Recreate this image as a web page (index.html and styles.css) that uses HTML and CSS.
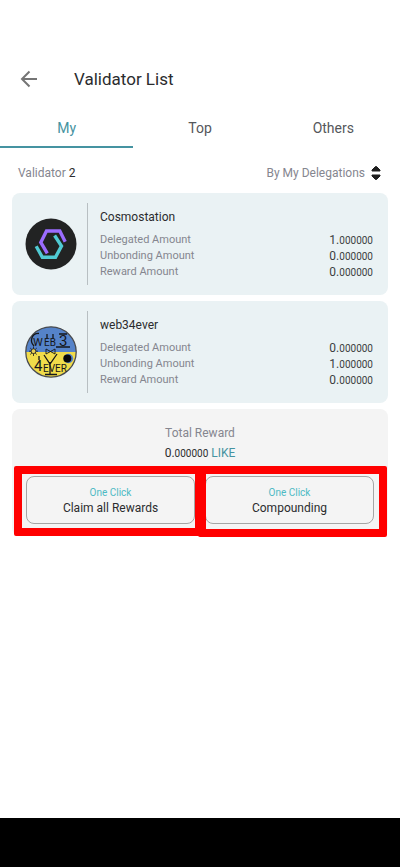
FILE: index.html
```html
<!DOCTYPE html>
<html lang="en">
<head>
<meta charset="utf-8">
<meta name="viewport" content="width=device-width, initial-scale=1">
<title>Validator List</title>
<link rel="stylesheet" href="styles.css">
</head>
<body>
<header class="topbar">
  <button class="back" type="button" aria-label="Back">
    <svg width="18" height="18" viewBox="0 0 18 18" fill="none" stroke="#757575" stroke-width="2"><path d="M17 9H2.500M9.500 1.500L2 9l7.500 7.500"/></svg>
  </button>
  <h1 class="title">Validator List</h1>
</header>
<nav class="tabs">
  <button class="tab active" type="button">My</button>
  <button class="tab" type="button">Top</button>
  <button class="tab" type="button">Others</button>
</nav>
<main class="content">
  <div class="summary">
    <span>Validator <span class="count">2</span></span>
    <button class="sort" type="button">By My Delegations
      <svg width="10" height="16" viewBox="0 0 10 16" fill="#1f1f1f" stroke="#1f1f1f" stroke-linejoin="round"><path d="M4.500 1.500h1L9 5v1H1V5ZM4.500 14.500h1L9 11v-1H1v1Z"/></svg>
    </button>
  </div>

  <article class="card">
    <svg class="logo" viewBox="0 0 52 52" fill="none" stroke-width="3.400">
      <circle cx="26" cy="26" r="25.500" fill="#222323"/>
      <path stroke="#9b6cff" d="M40.200 23.800L34.800 13H21.500L15.800 24.500l6.500 10.800"/>
      <path stroke="#50cbd4" d="M11.200 28.200L17.300 39.200H30.500l6-11.200L29.600 17.500"/>
    </svg>
    <div class="details">
      <h2 class="name">Cosmostation</h2>
      <dl class="amounts">
        <dt>Delegated Amount</dt><dd>1.<small>000000</small></dd>
        <dt>Unbonding Amount</dt><dd>0.<small>000000</small></dd>
        <dt>Reward Amount</dt><dd>0.<small>000000</small></dd>
      </dl>
    </div>
  </article>

  <article class="card">
    <svg class="logo" viewBox="0 0 52 52" fill="none" stroke="#15171a" stroke-width="1.300">
      <circle cx="26" cy="26" r="25.200" fill="#f0dc4a" stroke="none"/>
      <path d="M.8 26a25.200 25.200 0 0 1 50.400 0Z" fill="#5583c9" stroke="none"/>
      <circle cx="26" cy="26" r="25.200" stroke="#484b50"/>
      <path d="M14 7.500C7 7 4 15 9 20M22 8v5M28 8v5M31 21h14M34 8h8M19 29l6 9 7-10M25 36v12M20 48.500h12M14 30v4"/>
      <g class="logo-text">
        <text x="8" y="20" font-size="11">W</text>
        <text x="19" y="20" font-size="10">EB</text>
        <text x="34" y="20" font-size="15">3</text>
        <text x="9" y="45" font-size="15">4</text>
        <text x="18" y="46" font-size="10">EVER</text>
      </g>
      <circle cx="43.500" cy="32.500" r="4.700" fill="#5583c9" stroke="none"/>
      <circle cx="42.300" cy="32.500" r="4" fill="#08090b" stroke="none"/>
      <path stroke-width=".8" d="M8.500 20.500v9.500M4 25.200h9M5.200 22l6.600 6.500M11.800 22l-6.600 6.500"/>
      <circle cx="8.500" cy="25.200" r="2.400" fill="#e5ce55" stroke-width=".8"/>
      <path stroke-width=".9" d="M21 23l9 5v-5l-9 5Z"/>
    </svg>
    <div class="details">
      <h2 class="name">web34ever</h2>
      <dl class="amounts">
        <dt>Delegated Amount</dt><dd>0.<small>000000</small></dd>
        <dt>Unbonding Amount</dt><dd>1.<small>000000</small></dd>
        <dt>Reward Amount</dt><dd>0.<small>000000</small></dd>
      </dl>
    </div>
  </article>

  <section class="reward">
    <h2 class="reward-title">Total Reward</h2>
    <p class="reward-total">0.<small>000000</small> <span class="denom">LIKE</span></p>
    <div class="actions">
      <div class="highlight"><button class="action" type="button"><span class="hint">One Click</span>Claim all Rewards</button></div>
      <div class="highlight"><button class="action" type="button"><span class="hint">One Click</span>Compounding</button></div>
    </div>
  </section>
</main>
<footer class="system-bar"></footer>
</body>
</html>
```
FILE: styles.css
```css
* {
  box-sizing: border-box;
}

body {
  margin: 0;
  min-height: 100vh;
  display: flex;
  flex-direction: column;
  background: #fff;
  color: #2b2c2e;
  font-family: Roboto, sans-serif;
  font-size: 12px;
}

h1, h2, p, dl, dd {
  margin: 0;
  font-weight: 400;
}

button {
  border: 0;
  padding: 0;
  background: none;
  color: inherit;
  font: inherit;
}

svg {
  display: block;
  flex: none;
}

.topbar {
  display: flex;
  align-items: center;
  gap: 36px;
  margin-top: 50px;
  padding: 0 20px;
  height: 58px;
}

.title {
  font-size: 17px;
  line-height: 24px;
}

.tabs {
  display: grid;
  grid-template-columns: repeat(3, 1fr);
  height: 40px;
}

.tab {
  padding-top: 2px;
  border-bottom: 2px solid transparent;
  color: #55575b;
  font-size: 14px;
}

.tab.active {
  border-color: #4593a1;
  color: #4593a1;
}

.content {
  flex: 1;
  padding: 0 12px;
}

.summary {
  display: flex;
  justify-content: space-between;
  align-items: center;
  height: 45px;
  padding: 4px 7px 0 6px;
  color: #85868f;
}

.count {
  color: #2b2c2e;
}

.sort {
  display: flex;
  align-items: center;
  gap: 6px;
}

.card {
  display: flex;
  align-items: center;
  gap: 10px;
  margin-bottom: 6px;
  padding: 10px 15px 10px 13px;
  border-radius: 8px;
  background: #eaf2f4;
}

.logo {
  width: 52px;
  height: 52px;
}

.logo-text {
  fill: #15171a;
  stroke: none;
}

.details {
  flex: 1;
  padding: 5px 0 5px 12px;
  border-left: 1px solid #b8bfc2;
}

.name {
  margin-bottom: 6px;
  font-size: 12px;
  line-height: 18px;
}

.amounts {
  display: grid;
  grid-template-columns: 1fr auto;
  font-size: 11px;
  line-height: 16px;
  color: #85868f;
}

dd {
  color: #3c3e41;
  font-size: 12px;
}

small {
  font-size: 10px;
  line-height: 1;
}

.reward {
  padding: 14px 14px 12px;
  border-radius: 8px;
  background: #f4f4f4;
  text-align: center;
}

.reward-title {
  color: #85868f;
  font-size: 12px;
  line-height: 20px;
}

.reward-total {
  margin-bottom: 13px;
  line-height: 20px;
}

.denom {
  color: #4593a1;
}

.actions {
  display: grid;
  grid-template-columns: 1fr 1fr;
  gap: 10px;
}

.highlight {
  position: relative;
}

.highlight::after {
  content: "";
  position: absolute;
  inset: -10px -8px -12px -12px;
  border: 8px solid #f00;
  border-radius: 2px;
  pointer-events: none;
}

.highlight:last-child::after {
  inset: -10px -13px -13px -7px;
}

.action {
  width: 100%;
  height: 48px;
  padding-top: 2px;
  border: 1px solid #a5a5a5;
  border-radius: 8px;
  line-height: 16px;
}

.hint {
  display: block;
  color: #4dbac4;
  font-size: 10px;
  line-height: 14px;
}

.system-bar {
  height: 49px;
  background: #000;
}
```
